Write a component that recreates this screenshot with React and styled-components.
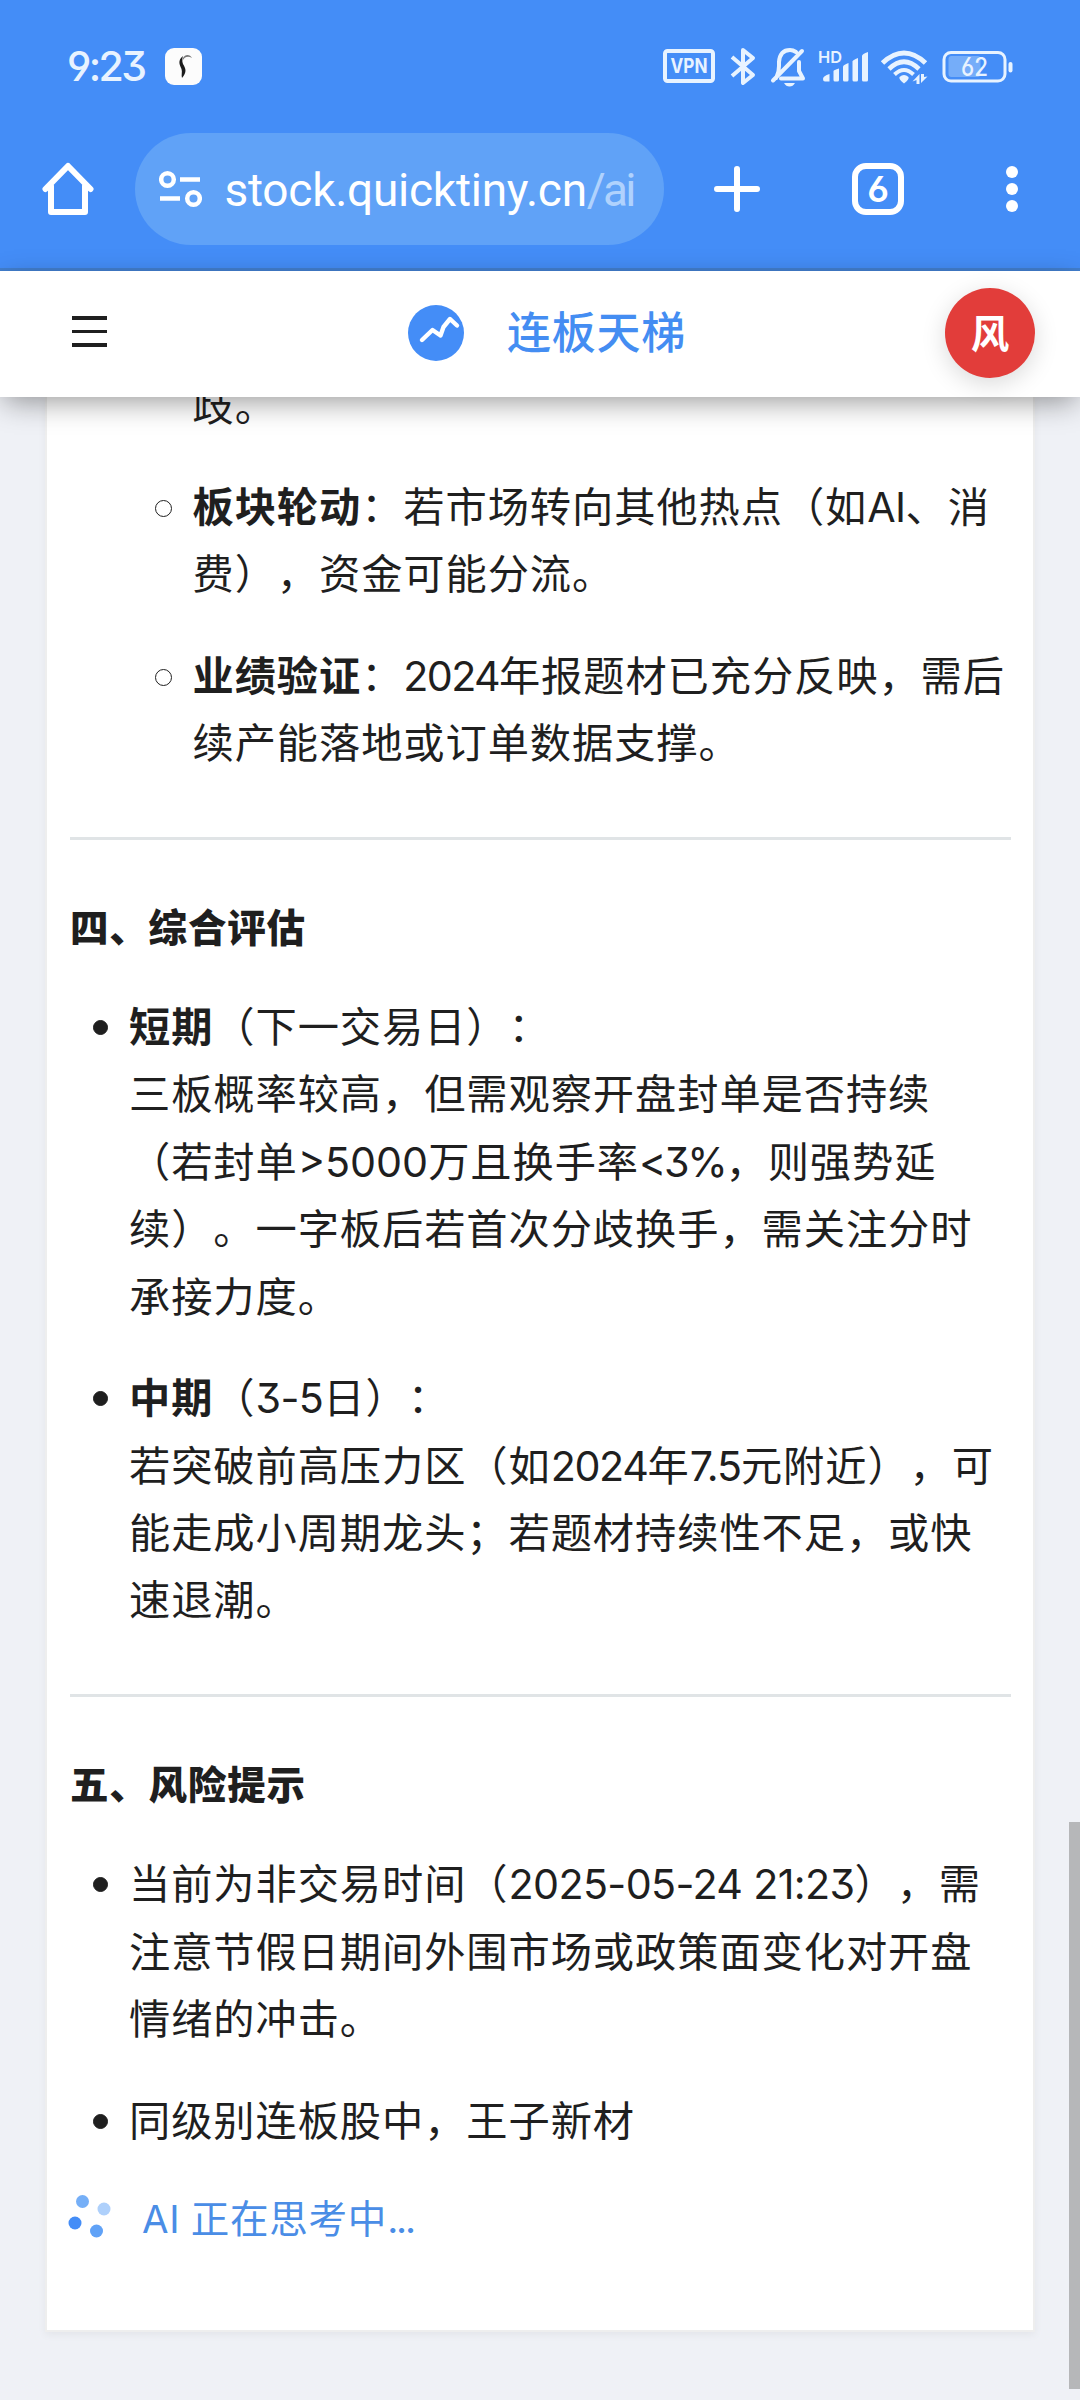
import React from 'react';
import styled, { createGlobalStyle } from 'styled-components';

const GlobalStyle = createGlobalStyle`
  *, *::before, *::after { box-sizing: border-box; }
  body {
    margin: 0;
    background: #eff1f6;
    color: #1f1f1f;
    font-family: Inter, "Noto Sans CJK SC", sans-serif;
    font-feature-settings: "cv03", "cv04", "cv09";
    text-spacing-trim: space-all;
    -webkit-font-smoothing: antialiased;
  }
`;

const Screen = styled.div`
  width: 1080px;
  height: 2400px;
  overflow: hidden;
  display: flex;
  flex-direction: column;
  position: relative;
`;

const BrowserChrome = styled.header`
  flex: none;
  height: 271px;
  background: #448df7;
  border-bottom: 3px solid #427fcf;
  color: #fff;
`;

const StatusBar = styled.div`
  height: 133px;
  display: flex;
  align-items: center;
  justify-content: space-between;
  padding: 0 65px 0 67px;
  color: #e8f3ff;
`;

const StatusLeft = styled.div`
  display: flex;
  align-items: center;
  gap: 18px;
`;

const Clock = styled.span`
  width: 80px;
  margin-top: -2px;
  font-size: 41px;
  line-height: 48px;
  font-weight: 500;
  letter-spacing: -2.6px;
  white-space: nowrap;
`;

const StatusIcons = styled.svg`
  display: block;
  width: 352px;
  height: 42px;
`;

const Toolbar = styled.div`
  height: 112px;
  display: flex;
  align-items: center;
  padding-left: 42px;
`;

const AddressBar = styled.div`
  width: 529px;
  height: 112px;
  margin-left: 41px;
  padding-left: 24px;
  border-radius: 56px;
  background: #60a2f7;
  display: flex;
  align-items: center;
  gap: 22.5px;
`;

const Url = styled.span`
  font-family: Roboto, sans-serif;
  font-size: 46px;
  line-height: 56px;
  letter-spacing: -0.25px;
  white-space: nowrap;
  padding-top: 2px;
`;

const UrlPath = styled.span`
  color: #b0d2fd;
  letter-spacing: -2.8px;
`;

const TabCount = styled.div`
  width: 52px;
  height: 52px;
  margin-left: 92px;
  border: 6px solid #fff;
  border-radius: 14px;
  display: flex;
  align-items: center;
  justify-content: center;
  font-size: 36px;
  font-weight: 600;
`;

const AppHeader = styled.div`
  flex: none;
  height: 126px;
  background: #fff;
  display: grid;
  grid-template-columns: 1fr auto 1fr;
  align-items: center;
  padding: 0 45px 2px 72px;
  box-shadow: 0 8px 28px -4px rgba(0, 0, 0, 0.42);
  position: relative;
  z-index: 1;
`;

const MenuButton = styled.div`
  width: 35px;
  display: flex;
  flex-direction: column;
  gap: 10px;
  margin-bottom: 3px;
`;

const MenuLine = styled.span`
  height: 3.6px;
  background: #1f1f1f;
`;

const Brand = styled.div`
  display: flex;
  align-items: center;
  gap: 43px;
  margin-left: -13px;
`;

const BrandName = styled.span`
  font-size: 44px;
  line-height: 60px;
  font-weight: 500;
  letter-spacing: 0.8px;
  color: #448df2;
`;

const Avatar = styled.div`
  justify-self: end;
  width: 90px;
  height: 90px;
  border-radius: 50%;
  background: #e23d3a;
  color: #fff;
  font-size: 38.5px;
  font-weight: 700;
  display: flex;
  align-items: center;
  justify-content: center;
  padding-bottom: 5px;
  box-shadow: 0 6px 24px rgba(0, 0, 0, 0.15);
`;

const Card = styled.main`
  flex: none;
  width: 990px;
  height: 1936px;
  margin: -1px 0 0 45px;
  padding: 0 22px 0 23px;
  background: #fff;
  border: 2px solid #eee;
  border-top: 0;
  box-shadow: 0 3px 8px rgba(0, 0, 0, 0.05);
`;

const Heading = styled.h3`
  margin: 0;
  padding-top: 55px;
  font-size: 38.5px;
  line-height: 67px;
  font-weight: 800;
  letter-spacing: 0.8px;
`;

const Divider = styled.hr`
  height: 3px;
  margin: 60px 0 0;
  border: 0;
  background: #e0e4e6;
`;

const List = styled.div`
  display: flex;
  flex-direction: column;
  gap: 34px;
  padding-left: ${(p) => (p.$nested ? '85px' : '23px')};
  margin-top: ${(p) => p.$top}px;
`;

const Item = styled.div`
  display: flex;
  gap: ${(p) => (p.$nested ? '20.5px' : '21px')};
`;

const Bullet = styled.span`
  flex: none;
  width: ${(p) => (p.$open ? 17 : 15)}px;
  height: ${(p) => (p.$open ? 17 : 15)}px;
  margin-top: 27px;
  border-radius: 50%;
  border: 1px solid #1f1f1f;
  background: ${(p) => (p.$open ? 'transparent' : '#1f1f1f')};
  visibility: ${(p) => (p.$hidden ? 'hidden' : 'visible')};
`;

const ItemText = styled.div`
  font-size: 41.25px;
  line-height: 67.45px;
  letter-spacing: 0.92px;
  white-space: nowrap;
  margin: 1px 0 -1px;
`;

const Line = styled.div`
  height: 67.45px;
`;

const Strong = styled.b`
  font-weight: 700;
`;

const Num = styled.span`
  letter-spacing: ${(p) => p.$track}px;
`;

const Thinking = styled.div`
  display: flex;
  align-items: center;
  gap: 30px;
  margin: 32px 0 0 -2px;
  height: 60px;
  color: #4a8de6;
  font-size: 38.5px;
  letter-spacing: 0.8px;
  word-spacing: -1.5px;
  white-space: nowrap;
`;

const Scrollbar = styled.div`
  position: absolute;
  right: 0;
  top: 1822px;
  width: 11px;
  height: 567px;
  background: #b6b7b9;
`;

const AppBadge = () => (
  <svg width="37" height="37" viewBox="0 0 37 37">
    <rect width="37" height="37" rx="9" fill="#fcfcfc" />
    <path d="M18 10C20 6 25 6 27 10C23 7.500 19 9 17.500 13Z" fill="#777" />
    <path d="M18 8C12 13 15 17 16.500 21C17.500 24 16 27 17 30C22 24 21 21 18 16C17 13 17 11 18 8Z" fill="#1b1b1b" />
  </svg>
);

const SystemIcons = () => (
  <StatusIcons viewBox="0 0 352 42" fill="none" stroke="#e8f3ff">
    <rect x="2" y="5" width="48" height="30" rx="2.500" strokeWidth="4" />
    <text x="26" y="27" textAnchor="middle" fontSize="20" fontWeight="700" fontFamily="Inter" fill="#e8f3ff" stroke="none" textLength="37" lengthAdjust="spacingAndGlyphs">VPN</text>
    <path d="M69 11L90 29L80 37V4L90 12L69 30" strokeWidth="4" strokeLinejoin="round" />
    <path d="M118 32.500H140L136 25V16M113 32C115 28 116 27 116 20V16Q117 4 127 4Q130 4 133 6M110 34.500L139 5" strokeWidth="4" strokeLinecap="round" strokeLinejoin="round" />
    <path d="M121 37H132Q130 40.500 126.500 40.500Q123 40.500 121 37Z" fill="#e8f3ff" stroke="none" />
    <text x="155" y="16.500" fontSize="16.500" fontWeight="600" fontFamily="Inter" fill="#e8f3ff" stroke="none" textLength="24" lengthAdjust="spacingAndGlyphs">HD</text>
    <g fill="#e8f3ff" stroke="none">
      <path d="M160 33Q160 30 166.500 28V35.500H162Q160 35.500 160 33Z" />
      <path d="M170.500 25Q170.500 24 176 22.500V34Q176 35.500 174.500 35.500H172Q170.500 35.500 170.500 34Z" />
      <path d="M180 20.500Q180 19 185.500 17V34Q185.500 35.500 184 35.500H181.500Q180 35.500 180 34Z" />
      <path d="M189.500 15.500Q189.500 14 195 12V34Q195 35.500 193.500 35.500H191Q189.500 35.500 189.500 34Z" />
      <path d="M199 10Q199 8 205 6V34Q205 35.500 203.500 35.500H200.500Q199 35.500 199 34Z" />
    </g>
    <g transform="translate(0.500 0)">
      <path d="M219 17Q240.500 -3 262 17" strokeWidth="5" />
      <path d="M225.500 23Q240.500 8.500 255.500 23" strokeWidth="4.600" />
      <path d="M231 28.500Q240.500 19.500 250 28.500" strokeWidth="4" />
      <path d="M236 31Q240.500 27 245 31Q246 33 240.500 37.500Q235 33 236 31Z" fill="#e8f3ff" stroke="none" />
      <path d="M256 28V38H253V34L249 35.500ZM257.500 37V28H260.500V31L264 30.500Z" fill="#e8f3ff" stroke="none" />
    </g>
    <rect x="281" y="6.500" width="61" height="28.500" rx="7" strokeWidth="3" />
    <rect x="285.500" y="10" width="32" height="21" rx="3" fill="#75adf9" stroke="none" />
    <rect x="345.500" y="16" width="4" height="10.500" rx="2" fill="#e8f3ff" stroke="none" />
    <text x="311.500" y="29.500" textAnchor="middle" fontSize="25" fontWeight="500" fontFamily="Inter" fill="#e8f3ff" stroke="none" textLength="27" lengthAdjust="spacingAndGlyphs">62</text>
  </StatusIcons>
);

const HomeIcon = () => (
  <svg width="52" height="54" viewBox="0 0 52 54" fill="none" stroke="#fff" strokeWidth="6" strokeLinejoin="round" strokeLinecap="round">
    <path d="M3.500 27L26 4L48.500 27M9 24V50H43V24" />
  </svg>
);

const TuneIcon = () => (
  <svg width="43" height="38" viewBox="0 0 43 38" fill="none" stroke="#fff" strokeWidth="4.500">
    <circle cx="8.500" cy="9.500" r="6.300" />
    <circle cx="34.500" cy="28.500" r="6.300" />
    <path d="M21 9.500H41M1 28.500H21" />
  </svg>
);

const PlusIcon = styled.svg`
  display: block;
  margin-left: 50px;
`;

const MoreIcon = styled.svg`
  display: block;
  margin-left: 102px;
`;

const BrandLogo = () => (
  <svg width="56" height="56" viewBox="0 0 56 56">
    <circle cx="28" cy="28" r="28" fill="#448df7" />
    <path d="M14 35L24.500 25L32.500 30.500L35.500 22L42 14L49 20.500" fill="none" stroke="#fff" strokeWidth="4.400" strokeLinecap="round" strokeLinejoin="round" />
  </svg>
);

const Spinner = () => (
  <svg width="44" height="44" viewBox="0 0 44 44">
    <circle cx="14.500" cy="7.500" r="6.500" fill="#75aff7" />
    <circle cx="36" cy="15" r="6.500" fill="#aed0fb" />
    <circle cx="7" cy="29" r="6.500" fill="#448df7" />
    <circle cx="28.500" cy="37" r="6.500" fill="#60a2f7" />
  </svg>
);

const Entry = ({ nested, continued, lines }) => (
  <Item $nested={nested}>
    <Bullet $open={nested} $hidden={continued} />
    <ItemText>
      {lines.map((line, i) => (
        <Line key={i}>{line}</Line>
      ))}
    </ItemText>
  </Item>
);

export default function App() {
  return (
    <>
      <GlobalStyle />
      <Screen>
        <BrowserChrome>
          <StatusBar>
            <StatusLeft>
              <Clock>9:23</Clock>
              <AppBadge />
            </StatusLeft>
            <SystemIcons />
          </StatusBar>
          <Toolbar>
            <HomeIcon />
            <AddressBar>
              <TuneIcon />
              <Url>stock.quicktiny.cn<UrlPath>/ai</UrlPath></Url>
            </AddressBar>
            <PlusIcon width="46" height="46" viewBox="0 0 46 46" stroke="#fff" strokeWidth="6" strokeLinecap="round">
              <path d="M23 3V43M3 23H43" />
            </PlusIcon>
            <TabCount>6</TabCount>
            <MoreIcon width="12" height="46" viewBox="0 0 12 46" fill="#fff">
              <circle cx="6" cy="6" r="6" />
              <circle cx="6" cy="23" r="6" />
              <circle cx="6" cy="40" r="6" />
            </MoreIcon>
          </Toolbar>
        </BrowserChrome>

        <AppHeader>
          <MenuButton>
            <MenuLine />
            <MenuLine />
            <MenuLine />
          </MenuButton>
          <Brand>
            <BrandLogo />
            <BrandName>连板天梯</BrandName>
          </Brand>
          <Avatar>风</Avatar>
        </AppHeader>

        <Card>
          <List $nested $top={-24.5}>
            <Entry nested continued lines={['歧。']} />
            <Entry nested lines={[<><Strong>板块轮动</Strong>：若市场转向其他热点（如<Num $track={-0.6}>AI</Num>、消</>, '费），资金可能分流。']} />
            <Entry nested lines={[<><Strong>业绩验证</Strong>：<Num $track={-1.7}>2024</Num>年报题材已充分反映，需后</>, '续产能落地或订单数据支撑。']} />
          </List>
          <Divider />
          <Heading>四、综合评估</Heading>
          <List $top={31.3}>
            <Entry
              lines={[
                <><Strong>短期</Strong>（下一交易日）：</>,
                '三板概率较高，但需观察开盘封单是否持续',
                <>（若封单<Num $track={0}>&gt;5000</Num>万且换手率<Num $track={-2.3}>&lt;3%</Num>，则强势延</>,
                '续）。一字板后若首次分歧换手，需关注分时',
                '承接力度。',
              ]}
            />
            <Entry
              lines={[
                <><Strong>中期</Strong>（<Num $track={-0.6}>3-5</Num>日）：</>,
                <>若突破前高压力区（如<Num $track={-1.4}>2024</Num>年<Num $track={-1.1}>7.5</Num>元附近），可</>,
                '能走成小周期龙头；若题材持续性不足，或快',
                '速退潮。',
              ]}
            />
          </List>
          <Divider />
          <Heading>五、风险提示</Heading>
          <List $top={31.3}>
            <Entry
              lines={[
                <>当前为非交易时间（<Num $track={-0.65}>2025-05-24 21:23</Num>），需</>,
                '注意节假日期间外围市场或政策面变化对开盘',
                '情绪的冲击。',
              ]}
            />
            <Entry lines={['同级别连板股中，王子新材']} />
          </List>
          <Thinking>
            <Spinner />
            <span>AI 正在思考中<Num $track={-2.2}>...</Num></span>
          </Thinking>
        </Card>
        <Scrollbar />
      </Screen>
    </>
  );
}
